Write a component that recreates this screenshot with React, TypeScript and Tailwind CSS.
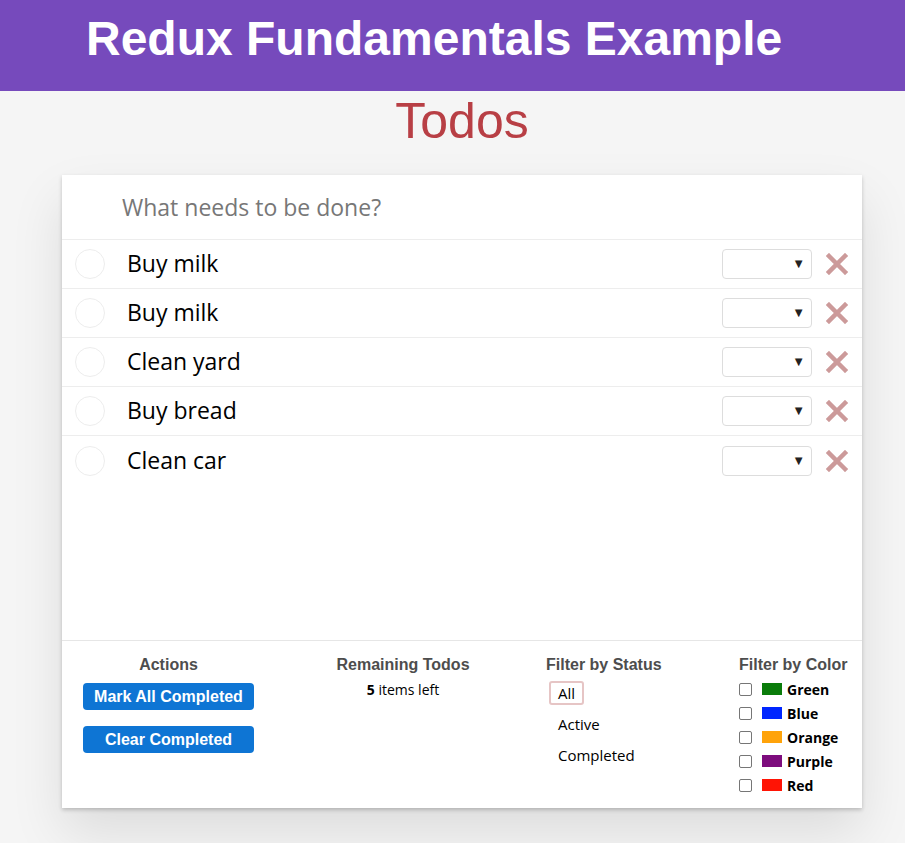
import React from "react";

const todos = ["Buy milk", "Buy milk", "Clean yard", "Buy bread", "Clean car"];
const colors = [
  { name: "Green", c: "#0a7c0a" },
  { name: "Blue", c: "#0026ff" },
  { name: "Orange", c: "#ffa30a" },
  { name: "Purple", c: "#7d0c7d" },
  { name: "Red", c: "#ff1405" },
];

const arial = { fontFamily: "'Liberation Sans', Arial, sans-serif" };

function XIcon() {
  return (
    <svg width="22" height="22" viewBox="0 0 22 22">
      <path d="M3 3 L19 19 M19 3 L3 19" stroke="#cc9a9a" strokeWidth="4.5" strokeLinecap="square" />
    </svg>
  );
}

export default function App() {
  return (
    <div className="min-h-[843px] bg-[#f5f5f5] text-[#111]" style={{ fontFamily: "'Open Sans', sans-serif" }}>
      <header className="h-[91px] bg-[#764abc] pl-[86px] pt-[11px]">
        <h1 className="whitespace-nowrap text-[48px] font-bold leading-[56px] text-white" style={arial}>
          Redux Fundamentals Example
        </h1>
      </header>
      <div className="ml-[62px] w-[800px]">
        <h2 className="h-[84px] text-center text-[50px] font-thin leading-[60px] text-[#b83f45]" style={arial}>
          Todos
        </h2>
        <section className="flex h-[633px] flex-col bg-white shadow-[0_2px_4px_rgba(0,0,0,0.2),0_25px_50px_rgba(0,0,0,0.1)]">
          <div className="h-[65px] border-b border-[#ededed] pl-[60px] pt-[17px] text-[23px] leading-[30px] text-[#777]">
            What needs to be done?
          </div>
          <ul className="flex-1">
            {todos.map((t, i) => (
              <li key={i} className="flex h-[49px] items-center border-b border-[#ededed] last:border-b-0">
                <div className="ml-[13px] h-[30px] w-[30px] rounded-full border border-[#ededed]" />
                <span className="ml-[22px] flex-1 pb-[2px] text-[23px] leading-[30px] text-black">{t}</span>
                <div className="flex h-[30px] w-[90px] items-center justify-end rounded-[4px] border border-[#ddd] pr-[6px] text-[13px] text-[#222]">
                  ▼
                </div>
                <div className="ml-[14px] mr-[14px] flex items-center">
                  <XIcon />
                </div>
              </li>
            ))}
          </ul>
          <footer className="flex h-[168px] border-t border-[#e6e6e6] pl-[21px] pt-[14px] text-[#4d4d4d]">
            <div className="flex w-[171px] flex-col items-center">
              <h5 className="whitespace-nowrap text-[16px] font-bold leading-[20px]" style={arial}>
                Actions
              </h5>
              <button
                className="mt-[8px] h-[27px] w-[171px] rounded-[4px] bg-[#0e75d4] text-[16px] font-bold text-white"
                style={arial}
              >
                Mark All Completed
              </button>
              <button
                className="mt-[16px] h-[27px] w-[171px] rounded-[4px] bg-[#0e75d4] text-[16px] font-bold text-white"
                style={arial}
              >
                Clear Completed
              </button>
            </div>
            <div className="ml-[83px] flex w-[132px] flex-col items-center">
              <h5 className="whitespace-nowrap text-[16px] font-bold leading-[20px]" style={arial}>
                Remaining Todos
              </h5>
              <div className="mt-[6px] whitespace-nowrap text-[14px] leading-[18px] text-black">
                <strong>5</strong> items left
              </div>
            </div>
            <div className="ml-[77px] flex w-[116px] flex-col">
              <h5 className="whitespace-nowrap text-[16px] font-bold leading-[20px]" style={arial}>
                Filter by Status
              </h5>
              <ul className="mt-[6px] text-[15px] leading-[18px] text-black">
                <li>
                  <span className="ml-[3px] inline-block rounded-[3px] border-2 border-[#e6c5c5] px-[7px] py-[2px] leading-[16px]">
                    All
                  </span>
                </li>
                <li className="mt-[10px] pl-[12px]">Active</li>
                <li className="mt-[13px] pl-[12px]">Completed</li>
              </ul>
            </div>
            <div className="ml-[77px] flex w-[108px] flex-col">
              <h5 className="whitespace-nowrap text-[16px] font-bold leading-[20px]" style={arial}>
                Filter by Color
              </h5>
              <div className="mt-[2px] flex flex-col">
                {colors.map((c) => (
                  <label key={c.name} className="flex h-[24px] items-center text-[14px] font-bold text-black">
                    <span className="h-[13px] w-[13px] rounded-[2px] border border-[#767676] bg-white" />
                    <span className="ml-[10px] h-[12px] w-[20px]" style={{ backgroundColor: c.c }} />
                    <span className="ml-[5px]">{c.name}</span>
                  </label>
                ))}
              </div>
            </div>
          </footer>
        </section>
      </div>
    </div>
  );
}
